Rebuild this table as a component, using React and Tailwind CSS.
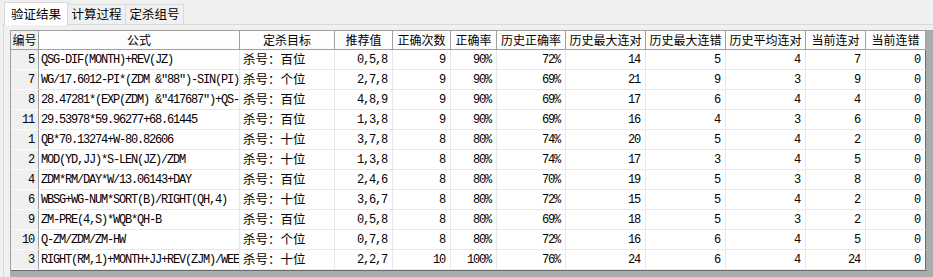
import React from "react";

const cols = [
  { label: "编号", w: "w-[28px]", kind: "id" },
  { label: "公式", w: "w-[201px]", kind: "formula" },
  { label: "定杀目标", w: "w-[95px]", kind: "cn" },
  { label: "推荐值", w: "w-[58px]", kind: "num" },
  { label: "正确次数", w: "w-[58px]", kind: "num" },
  { label: "正确率", w: "w-[46px]", kind: "num" },
  { label: "历史正确率", w: "w-[69px]", kind: "num" },
  { label: "历史最大连对", w: "w-[80px]", kind: "num" },
  { label: "历史最大连错", w: "w-[80px]", kind: "num" },
  { label: "历史平均连对", w: "w-[80px]", kind: "num" },
  { label: "当前连对", w: "w-[60px]", kind: "num" },
  { label: "当前连错", w: "w-[60px]", kind: "num", last: true },
];

const rows = [
  [5, "QSG-DIF(MONTH)+REV(JZ)", "杀号：百位", "0,5,8", 9, "90%", "72%", 14, 5, 4, 7, 0],
  [7, 'WG/17.6012-PI*(ZDM &"88")-SIN(PI))', "杀号：个位", "2,7,8", 9, "90%", "69%", 21, 9, 3, 9, 0],
  [8, '28.47281*(EXP(ZDM) &"417687")+QS-B', "杀号：百位", "4,8,9", 9, "90%", "69%", 17, 6, 4, 4, 0],
  [11, "29.53978*59.96277+68.61445", "杀号：百位", "1,3,8", 9, "90%", "69%", 16, 4, 3, 6, 0],
  [1, "QB*70.13274+W-80.82606", "杀号：十位", "3,7,8", 8, "80%", "74%", 20, 5, 4, 2, 0],
  [2, "MOD(YD,JJ)*S-LEN(JZ)/ZDM", "杀号：十位", "1,3,8", 8, "80%", "74%", 17, 3, 4, 5, 0],
  [4, "ZDM*RM/DAY*W/13.06143+DAY", "杀号：百位", "2,4,6", 8, "80%", "70%", 19, 5, 3, 8, 0],
  [6, "WBSG+WG-NUM*SORT(B)/RIGHT(QH,4)", "杀号：十位", "3,6,7", 8, "80%", "72%", 15, 5, 4, 2, 0],
  [9, "ZM-PRE(4,S)*WQB*QH-B", "杀号：百位", "0,5,8", 8, "80%", "69%", 18, 5, 3, 2, 0],
  [10, "Q-ZM/ZDM/ZM-HW", "杀号：个位", "0,7,8", 8, "80%", "72%", 16, 6, 4, 5, 0],
  [3, "RIGHT(RM,1)+MONTH+JJ+REV(ZJM)/WEEK", "杀号：十位", "2,2,7", 10, "100%", "76%", 24, 6, 4, 24, 0],
];

const mono = "font-['Liberation_Mono',monospace] text-[12px] tracking-[-1.2px]";

function Tab({ label, active }) {
  if (active) {
    return (
      <div className="relative z-10 -mb-px flex h-[23px] w-[64px] items-center justify-center border border-b-0 border-[#d9d9d9] bg-white text-[12.5px]">
        {label}
      </div>
    );
  }
  return (
    <div className="flex h-[20px] w-[58px] items-center justify-center border border-l-0 border-b-0 border-[#d9d9d9] bg-[#f0f0f0] text-[12.5px]">
      {label}
    </div>
  );
}

function Cell({ col, value }) {
  const edge = col.last ? "border-r-[#6b6b6b]" : "";
  if (col.kind === "id") {
    return (
      <div className={`${col.w} flex h-[20px] shrink-0 items-center justify-end border-r border-b border-r-[#a0a0a0] border-b-[#fafafa] bg-[#f0f0f0] pr-[4px] ${mono}`}>
        {value}
      </div>
    );
  }
  if (col.kind === "formula") {
    return (
      <div className={`${col.w} flex h-[20px] shrink-0 items-center overflow-hidden whitespace-nowrap border-r border-b border-[#e8e8e8] bg-white pl-[2px] ${mono}`}>
        {value}
      </div>
    );
  }
  if (col.kind === "cn") {
    return (
      <div className={`${col.w} flex h-[20px] shrink-0 items-center overflow-hidden whitespace-nowrap border-r border-b border-[#e8e8e8] bg-white pl-[3px] text-[12.5px]`}>
        {value}
      </div>
    );
  }
  return (
    <div className={`${col.w} flex h-[20px] shrink-0 items-center justify-end border-r border-b border-[#e8e8e8] ${edge} bg-white pr-[5px] ${mono}`}>
      {value}
    </div>
  );
}

export default function App() {
  return (
    <div className="flex h-[277px] w-[933px] flex-col overflow-hidden bg-[#f0f0f0] font-['Noto_Sans_CJK_SC',sans-serif] text-black">
      <div className="flex h-[24px] items-end pl-[4px]">
        <Tab label="验证结果" active />
        <Tab label="计算过程" />
        <Tab label="定杀组号" />
      </div>
      <div className="ml-[3px] flex-1 border-l border-t border-[#d9d9d9] pl-[6px] pt-[5px]">
        <div className="h-full bg-[#ababab]">
          <div className="w-[917px] border-l border-[#a0a0a0]">
            <div className="flex border-t border-[#a0a0a0]">
              {cols.map((c) => (
                <div
                  key={c.label}
                  className={`${c.w} flex h-[19px] shrink-0 items-center justify-center border-r border-b border-[#a0a0a0] ${c.kind === "id" ? "bg-[#f0f0f0]" : "bg-[#fdfdfd]"} text-[12px] whitespace-nowrap`}
                >
                  {c.label}
                </div>
              ))}
            </div>
            <div className="border-b border-[#6b6b6b]">
              {rows.map((r, i) => (
                <div key={i} className="flex">
                  {cols.map((c, j) => (
                    <Cell key={j} col={c} value={r[j]} />
                  ))}
                </div>
              ))}
            </div>
          </div>
        </div>
      </div>
    </div>
  );
}
